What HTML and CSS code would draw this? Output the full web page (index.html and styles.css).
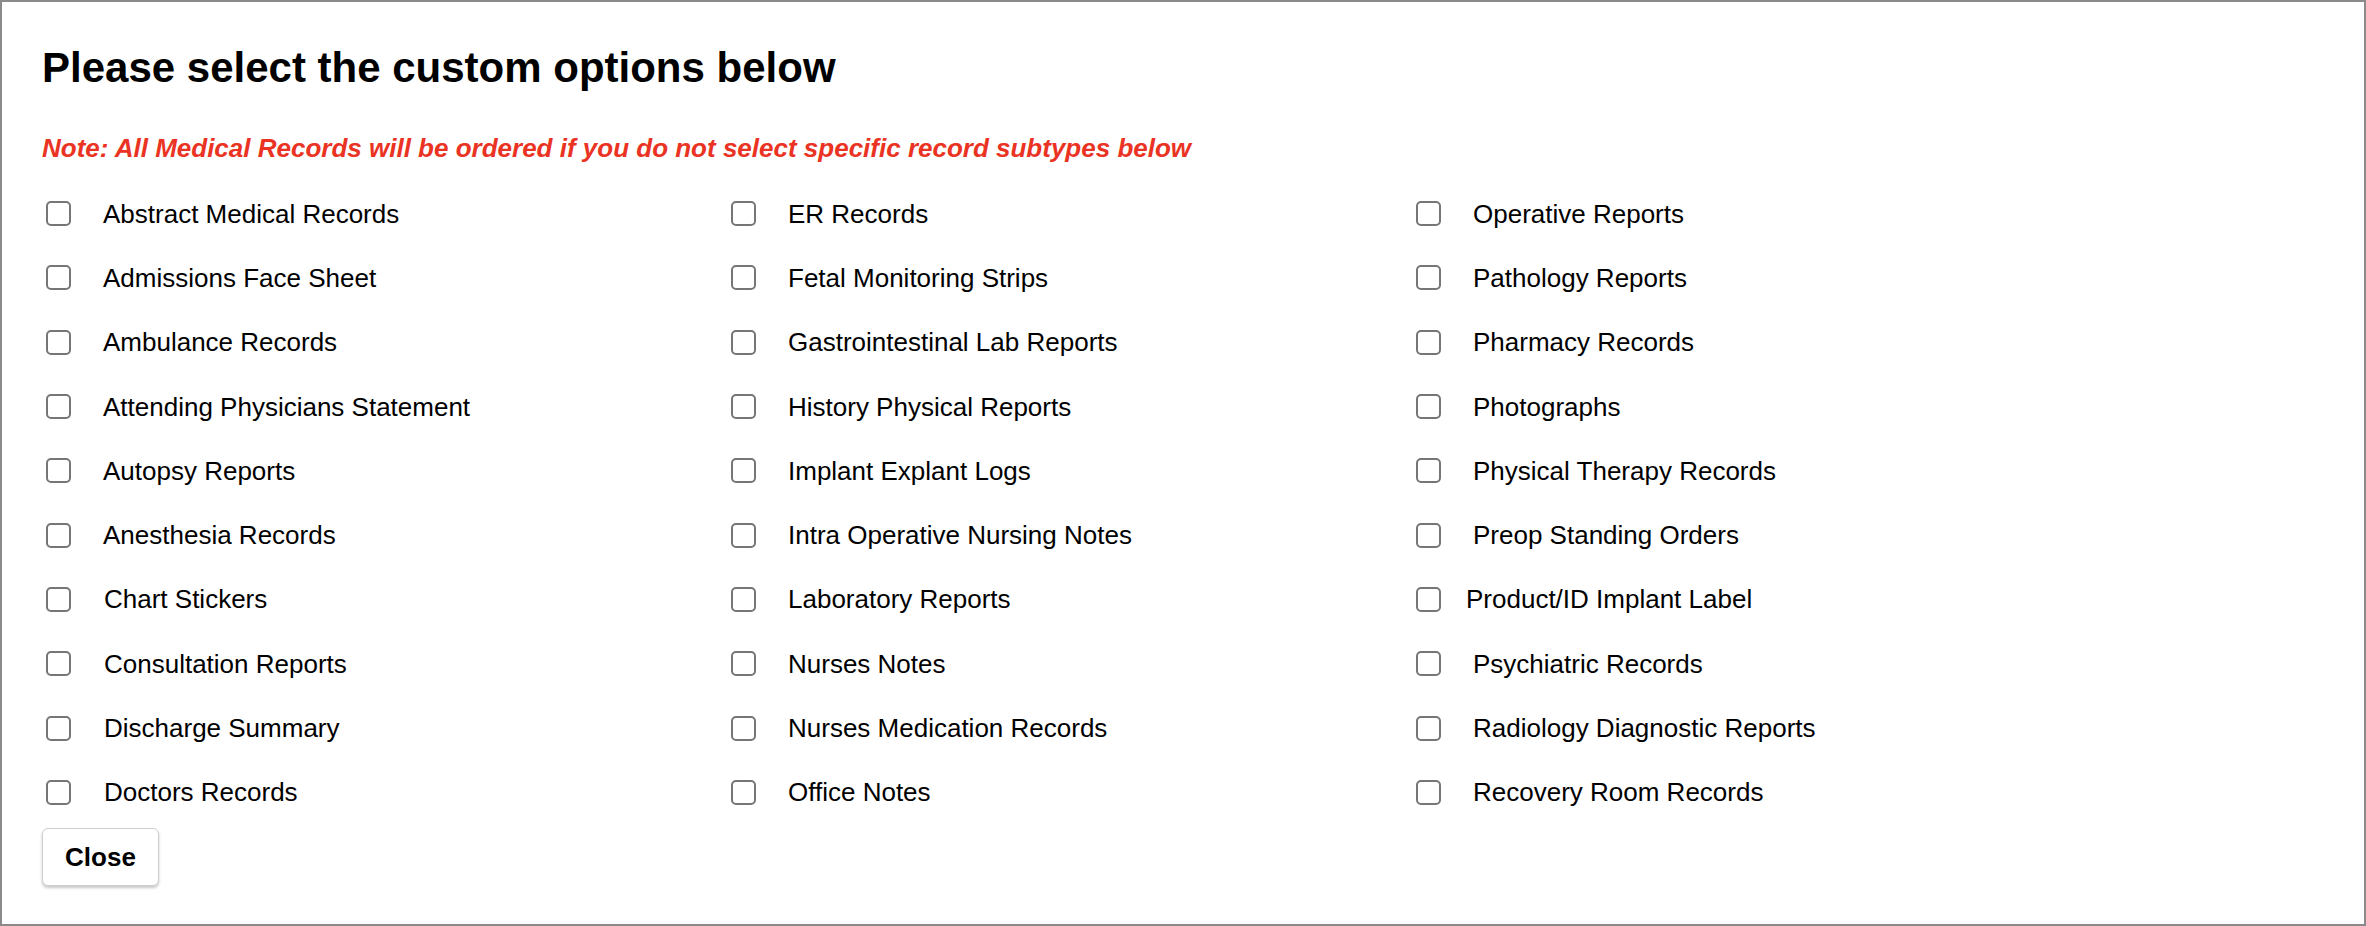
FILE: index.html
```html
<!DOCTYPE html>
<html lang="en">
<head>
<meta charset="utf-8">
<title>Custom options</title>
<link rel="stylesheet" href="styles.css">
</head>
<body>
<div class="panel">
  <h2 class="title">Please select the custom options below</h2>
  <p class="note">Note: All Medical Records will be ordered if you do not select specific record subtypes below</p>
  <div class="options">
    <div class="col">
      <label class="opt"><input type="checkbox" class="box"><span class="txt">Abstract Medical Records</span></label>
      <label class="opt"><input type="checkbox" class="box"><span class="txt">Admissions Face Sheet</span></label>
      <label class="opt"><input type="checkbox" class="box"><span class="txt">Ambulance Records</span></label>
      <label class="opt"><input type="checkbox" class="box"><span class="txt">Attending Physicians Statement</span></label>
      <label class="opt"><input type="checkbox" class="box"><span class="txt">Autopsy Reports</span></label>
      <label class="opt"><input type="checkbox" class="box"><span class="txt">Anesthesia Records</span></label>
      <label class="opt"><input type="checkbox" class="box"><span class="txt wide">Chart Stickers</span></label>
      <label class="opt"><input type="checkbox" class="box"><span class="txt wide">Consultation Reports</span></label>
      <label class="opt"><input type="checkbox" class="box"><span class="txt wide">Discharge Summary</span></label>
      <label class="opt"><input type="checkbox" class="box"><span class="txt wide">Doctors Records</span></label>
    </div>
    <div class="col">
      <label class="opt"><input type="checkbox" class="box"><span class="txt">ER Records</span></label>
      <label class="opt"><input type="checkbox" class="box"><span class="txt">Fetal Monitoring Strips</span></label>
      <label class="opt"><input type="checkbox" class="box"><span class="txt">Gastrointestinal Lab Reports</span></label>
      <label class="opt"><input type="checkbox" class="box"><span class="txt">History Physical Reports</span></label>
      <label class="opt"><input type="checkbox" class="box"><span class="txt">Implant Explant Logs</span></label>
      <label class="opt"><input type="checkbox" class="box"><span class="txt">Intra Operative Nursing Notes</span></label>
      <label class="opt"><input type="checkbox" class="box"><span class="txt">Laboratory Reports</span></label>
      <label class="opt"><input type="checkbox" class="box"><span class="txt">Nurses Notes</span></label>
      <label class="opt"><input type="checkbox" class="box"><span class="txt">Nurses Medication Records</span></label>
      <label class="opt"><input type="checkbox" class="box"><span class="txt">Office Notes</span></label>
    </div>
    <div class="col">
      <label class="opt"><input type="checkbox" class="box"><span class="txt">Operative Reports</span></label>
      <label class="opt"><input type="checkbox" class="box"><span class="txt">Pathology Reports</span></label>
      <label class="opt"><input type="checkbox" class="box"><span class="txt">Pharmacy Records</span></label>
      <label class="opt"><input type="checkbox" class="box"><span class="txt">Photographs</span></label>
      <label class="opt"><input type="checkbox" class="box"><span class="txt">Physical Therapy Records</span></label>
      <label class="opt"><input type="checkbox" class="box"><span class="txt">Preop Standing Orders</span></label>
      <label class="opt"><input type="checkbox" class="box"><span class="txt tight">Product/ID Implant Label</span></label>
      <label class="opt"><input type="checkbox" class="box"><span class="txt">Psychiatric Records</span></label>
      <label class="opt"><input type="checkbox" class="box"><span class="txt">Radiology Diagnostic Reports</span></label>
      <label class="opt"><input type="checkbox" class="box"><span class="txt">Recovery Room Records</span></label>
    </div>
  </div>
  <button type="button" class="close-btn">Close</button>
</div>
</body>
</html>
```

FILE: styles.css
```css
* { box-sizing: border-box; }

html, body {
  margin: 0;
  padding: 0;
  background: #ffffff;
}

body {
  font-family: "Liberation Sans", Arial, Helvetica, sans-serif;
  color: #000;
}

.panel {
  width: 2366px;
  height: 926px;
  border: 2px solid #8a8a8a;
  padding: 42px 40px 0 40px;
}

.title {
  margin: 0;
  font-size: 42px;
  font-weight: 700;
  line-height: 48px;
}

.note {
  margin: 41px 0 0 0;
  font-size: 26px;
  font-weight: 700;
  font-style: italic;
  color: #ea3323;
  line-height: 30px;
}

.options {
  margin-top: 18.5px;
  display: grid;
  grid-template-columns: repeat(3, 685px);
}

.col {
  display: flex;
  flex-direction: column;
}

.opt {
  display: flex;
  align-items: center;
  height: 64.3px;
  font-size: 26px;
  line-height: 30px;
}

.box {
  appearance: none;
  -webkit-appearance: none;
  margin: 0 0 0 4px;
  width: 25px;
  height: 25px;
  border: 2px solid #767676;
  border-radius: 5px;
  background: #fff;
  flex: none;
}

.txt {
  margin-left: 32px;
}

.txt.wide {
  margin-left: 33px;
}

.txt.tight {
  margin-left: 25px;
}

.close-btn {
  margin-top: 4px;
  width: 117px;
  height: 58px;
  padding: 0;
  font-family: "Liberation Sans", Arial, Helvetica, sans-serif;
  font-size: 26px;
  font-weight: 700;
  color: #000;
  background: #fff;
  border: 1px solid #cfcfcf;
  border-radius: 6px;
  box-shadow: 0 2px 3px rgba(0, 0, 0, 0.22);
}
```
